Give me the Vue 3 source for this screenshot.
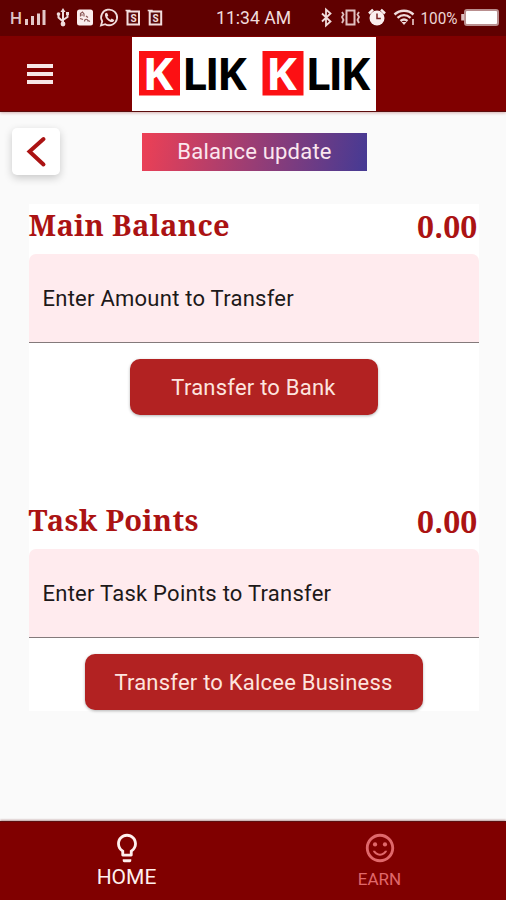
<template>
  <div class="screen">
    <div class="status-bar">
      <svg class="status-icons" viewBox="0 0 170 36" width="170" height="36">
        <text class="net" x="10" y="23.500" textLength="12" lengthAdjust="spacingAndGlyphs">H</text>
        <path d="M26.500 19v6M32.500 16v9M38.500 13.500v11.500M44 10v15" stroke="#e3c9c9" stroke-width="3" />
        <!-- usb -->
        <g fill="none" stroke="#f0dcdc" stroke-width="2">
          <path d="M63 10v14M58.500 14v3.500l4.500 4M67.500 13v4l-4.500 3" />
          <path d="M63 8l-2.500 4h5z" fill="#f0dcdc" stroke="none" />
          <circle cx="63" cy="24" r="2.400" fill="#f0dcdc" stroke="none" />
          <circle cx="58.500" cy="14" r="1.800" fill="#f0dcdc" stroke="none" />
          <path d="M66 12h3v3h-3z" fill="#f0dcdc" stroke="none" />
        </g>
        <!-- app notification -->
        <rect x="77" y="9.500" width="16" height="16" rx="2.500" fill="#fbeeee" />
        <path d="M80.500 16.500v-3l2-1.500 1.500 2v2.500M80 18.500l3 1M86 16l2 1.500M84.500 21.500c0-3 3.500-3 3.500 0M88 20.500l2 1M80 15h3" fill="none" stroke="#8d5a5a" stroke-width="1.200" />
        <!-- whatsapp -->
        <path d="M101 25.500l1.200-4.200a8 7.800 0 1 1 3 2.900z" fill="none" stroke="#f0dcdc" stroke-width="1.800" />
        <path d="M105 13.500l2-.8 1.300 2.800-1 1.300c.8 1.500 1.800 2.400 3.200 3l1.200-1.200 2.500 1.300c0 1.800-2 2.500-3.500 2-3.300-1.100-5.300-3.800-5.700-6.400z" fill="#f0dcdc" />
        <!-- S badges -->
        <g v-for="x in [125.500, 147.700]" :key="x" :transform="`translate(${x} 9)`">
          <path d="M2 2.500h11.500v13H2z" fill="#5a0a0a" stroke="#f3dede" stroke-width="2" />
          <path d="M0 1.500h5" stroke="#f3dede" stroke-width="1.500" />
          <text class="badge-letter" x="4.900" y="12.700">S</text>
        </g>
      </svg>
      <span class="clock">11:34 AM</span>
      <svg class="status-icons" viewBox="318 0 188 36" width="188" height="36">
        <!-- bluetooth -->
        <path d="M322 13.500l8.500 8-4.500 4V9.500l4.500 4-8.500 8" fill="none" stroke="#f0dcdc" stroke-width="1.800" />
        <!-- vibrate -->
        <g fill="none" stroke="#dfc0c0">
          <path d="M346.500 10.500h8v14h-8z" stroke-width="2" />
          <path d="M342 12l1.500 2.500-1.500 2.500 1.500 3-1.500 3M359 12l-1.500 2.500 1.500 2.500-1.500 3 1.500 3" stroke-width="1.800" />
        </g>
        <!-- alarm -->
        <circle cx="377" cy="18" r="7.500" fill="#fbeeee" />
        <path d="M369 13.500l4-3.800M385 13.500l-4-3.800" stroke="#fbeeee" stroke-width="2.500" />
        <path d="M377 13.500v5h3.800" fill="none" stroke="#7a2020" stroke-width="1.500" />
        <!-- wifi -->
        <g fill="none" stroke="#f0dcdc" stroke-width="2.400">
          <path d="M394.500 14.500c5.500-5 13.500-5 19 0M397.500 17.800c4-3.400 9-3.400 13 0M400.500 21c2.200-1.800 4.800-1.800 7 0" />
          <path d="M401.500 22h5l-2.500 3z" fill="#f0dcdc" stroke="none" />
          <path d="M413 19v6" stroke="#cfa5a5" stroke-width="2" />
        </g>
        <text class="percent" x="420.500" y="24" textLength="37" lengthAdjust="spacingAndGlyphs">100%</text>
        <!-- battery -->
        <rect x="465" y="10" width="33" height="15" rx="2" fill="#fff" stroke="#b98f8f" stroke-width="2" />
        <path d="M462.700 14v6.500" stroke="#dcc0c0" stroke-width="3" />
      </svg>
    </div>

    <header class="app-bar">
      <button class="menu-btn" aria-label="Menu">
        <span></span><span></span><span></span>
      </button>
      <div class="logo">
        <svg viewBox="0 0 244 74" width="244" height="74">
          <g v-for="x in [0, 123.500]" :key="x" :transform="`translate(${x} 0)`">
            <rect x="7" y="14" width="41" height="44.500" fill="#fc1013" />
            <text x="10.500" y="53" fill="#fff" textLength="31" lengthAdjust="spacingAndGlyphs">K</text>
            <text x="50" y="53" fill="#000" textLength="65" lengthAdjust="spacing">LIK</text>
          </g>
        </svg>
      </div>
    </header>

    <div class="title-row">
      <button class="back-btn" aria-label="Back">
        <svg viewBox="0 0 48 47" width="48" height="47">
          <path d="M31.500 11L17.500 23.500l14 13" fill="none" stroke="#ab1313" stroke-width="4" stroke-linecap="round" />
        </svg>
      </button>
      <div class="page-title">Balance update</div>
    </div>

    <main class="card">
      <section v-for="item in balances" :key="item.title" class="balance">
        <div class="balance-head">
          <h2>{{ item.title }}</h2>
          <span class="amount">{{ item.amount }}</span>
        </div>
        <div class="field">{{ item.placeholder }}</div>
        <button class="transfer-btn" :class="item.size">{{ item.action }}</button>
      </section>
    </main>

    <nav class="bottom-nav">
      <a class="tab active">
        <svg viewBox="0 0 24 24" width="34" height="34" fill="currentColor">
          <path d="M9 21c0 .5.400 1 1 1h4c.6 0 1-.5 1-1v-1H9v1zm3-19C8.100 2 5 5.100 5 9c0 2.400 1.200 4.500 3 5.700V17c0 .5.400 1 1 1h6c.6 0 1-.5 1-1v-2.300c1.800-1.300 3-3.400 3-5.700 0-3.900-3.100-7-7-7zm2.900 11.100l-.9.600V16h-4v-2.300l-.9-.6C7.800 12.200 7 10.600 7 9c0-2.800 2.200-5 5-5s5 2.200 5 5c0 1.600-.8 3.200-2.100 4.100z" />
        </svg>
        <span>HOME</span>
      </a>
      <a class="tab">
        <svg viewBox="0 0 24 24" width="34" height="34" fill="currentColor">
          <circle cx="15.500" cy="9.500" r="1.500" />
          <circle cx="8.500" cy="9.500" r="1.500" />
          <path d="M11.990 2C6.470 2 2 6.480 2 12s4.470 10 9.990 10C17.520 22 22 17.520 22 12S17.520 2 11.990 2zM12 20c-4.420 0-8-3.580-8-8s3.580-8 8-8 8 3.580 8 8-3.580 8-8 8zm0-4c-1.480 0-2.750-.81-3.450-2H6.880c.8 2.050 2.790 3.500 5.120 3.500s4.320-1.450 5.120-3.500h-1.670c-.7 1.190-1.970 2-3.450 2z" />
        </svg>
        <span>EARN</span>
      </a>
    </nav>
  </div>
</template>

<script setup>
const balances = [
  {
    title: 'Main Balance',
    amount: '0.00',
    placeholder: 'Enter Amount to Transfer',
    action: 'Transfer to Bank',
    size: 'medium'
  },
  {
    title: 'Task Points',
    amount: '0.00',
    placeholder: 'Enter Task Points to Transfer',
    action: 'Transfer to Kalcee Business',
    size: 'wide'
  }
]
</script>

<style>
body {
  margin: 0;
}
</style>

<style scoped>
.screen {
  display: flex;
  flex-direction: column;
  width: 506px;
  height: 900px;
  overflow: hidden;
  background-color: #fafafa;
  font-family: Roboto, "Liberation Sans", sans-serif;
}

button {
  border: none;
  padding: 0;
  font-family: inherit;
}

.status-bar {
  display: flex;
  align-items: center;
  height: 36px;
  flex: none;
  background-color: #600000;
  color: #f0dcdc;
}

.status-icons {
  display: block;
  flex: none;
}

.net { font-size: 17px; font-weight: 500; fill: #dfc5c5; }
.percent { font-size: 17px; fill: #ecd5d5; }
.badge-letter { font-size: 10px; font-weight: 700; fill: #f3dede; }

.clock {
  margin: 0 auto 0 46px;
  font-size: 17.6px;
  white-space: nowrap;
}

.app-bar {
  display: flex;
  align-items: center;
  height: 76px;
  flex: none;
  box-sizing: border-box;
  border-bottom: 1px solid #5c0d0d;
  background-color: #800000;
  box-shadow: 0 1px 3px rgba(128, 0, 0, 0.3);
}

.menu-btn {
  display: flex;
  flex-direction: column;
  gap: 4px;
  width: 26px;
  margin-left: 27px;
  background: none;
}

.menu-btn span {
  height: 4px;
  background-color: #f7e6e6;
}

.logo {
  width: 244px;
  height: 74px;
  margin-left: 79px;
  background-color: #fff;
}

.logo svg { display: block; }

.logo text {
  font-family: "Open Sans", "Noto Sans", sans-serif;
  font-size: 45px;
  font-weight: 700;
}

.title-row {
  display: flex;
  align-items: center;
  height: 47px;
  flex: none;
  margin: 16px 0 0 12px;
}

.back-btn {
  width: 48px;
  height: 47px;
  border-radius: 5px;
  background-color: #fff;
  box-shadow: 0 3px 8px rgba(0, 0, 0, 0.2);
}

.back-btn svg { display: block; }

.page-title {
  width: 225px;
  height: 38px;
  margin-left: 82px;
  background: linear-gradient(100deg, #ed4055, #453a94);
  color: #fbe6ee;
  font-size: 22px;
  letter-spacing: 0.2px;
  line-height: 38px;
  text-align: center;
}

.card {
  width: 450px;
  height: 507px;
  flex: none;
  margin: 29px 0 0 28.5px;
  background-color: #fff;
}

.balance {
  display: flex;
  flex-direction: column;
  height: 295px;
}

.balance-head {
  display: flex;
  justify-content: space-between;
  height: 49.5px;
  flex: none;
  color: #ab1313;
  font-family: "Noto Serif", "DejaVu Serif Condensed", "DejaVu Serif", serif;
  font-weight: 700;
}

.balance-head h2 {
  margin: 0;
  font-size: 29px;
  letter-spacing: 0.3px;
  line-height: 42px;
  white-space: nowrap;
}

.amount {
  margin-right: 1px;
  font-size: 30px;
  letter-spacing: 0.2px;
  line-height: 45px;
}

.field {
  height: 89.5px;
  box-sizing: border-box;
  padding-left: 14px;
  border-bottom: 1.5px solid #847a7b;
  border-radius: 7px 7px 0 0;
  background-color: #ffebee;
  color: #1d1919;
  font-size: 22px;
  letter-spacing: 0.25px;
  line-height: 89px;
}

.transfer-btn {
  align-self: center;
  height: 56px;
  margin-top: 16px;
  border-radius: 10px;
  background-color: #b22222;
  box-shadow: 0 1px 3px rgba(0, 0, 0, 0.3);
  color: #fde4df;
  font-size: 22px;
  letter-spacing: 0.22px;
}

.medium { width: 248px; }
.wide { width: 338px; }

.bottom-nav {
  display: flex;
  height: 79px;
  flex: none;
  margin-top: auto;
  box-sizing: border-box;
  border-top: 1px solid #5c1010;
  background-color: #800000;
  box-shadow: 0 -1px 2px rgba(90, 0, 0, 0.4);
}

.tab {
  display: flex;
  flex: 1;
  flex-direction: column;
  align-items: center;
  padding-top: 9px;
  color: #e0686b;
  font-size: 17px;
  line-height: 29px;
}

.tab.active {
  color: #fff0ee;
  font-size: 21px;
  line-height: 25px;
}
</style>
